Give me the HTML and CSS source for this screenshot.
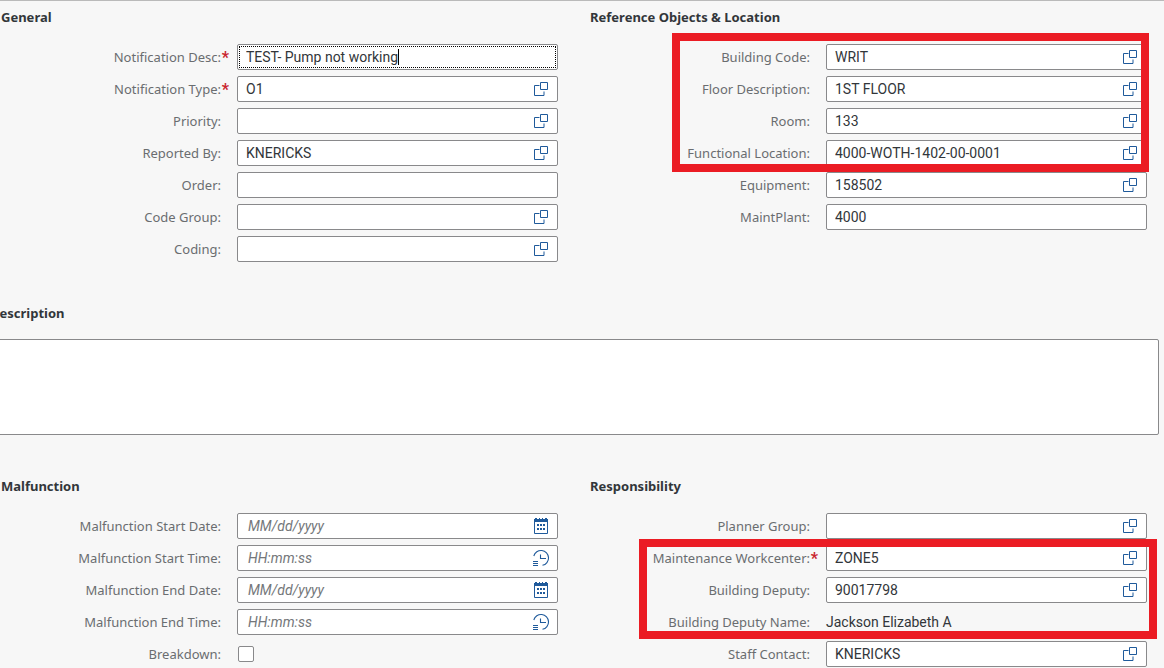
FILE: index.html
```
<!DOCTYPE html>
<html lang="en">
<head>
<meta charset="utf-8">
<title>Notification</title>
<link rel="stylesheet" href="styles.css">
</head>
<body>
<svg class="sprite" aria-hidden="true">
  <symbol id="lookup" viewBox="0 0 16 16"><path d="M6.5 4.500h-5v10h9.500v-4M7.500 1.500h7v7h-7z" fill="none" stroke="currentColor"/></symbol>
  <symbol id="calendar" viewBox="0 0 16 16"><path d="M1.500 2.500h13v13h-13z" fill="none" stroke="currentColor"/><path d="M1 1h1V0h2v1h2V0h1v1h2V0h1v1h2V0h2v1h1v3H1zM4 6h2v2H4zM7 6h2v2H7zM10 6h2v2h-2zM4 10h2v2H4zM7 10h2v2H7zM10 10h2v2h-2z" fill="currentColor"/></symbol>
  <symbol id="clock" viewBox="0 0 18 18"><path d="M1.800 7A7.500 7.500 0 1 1 10.500 16.300M8.500 5.500v4H14M1 12.500h5M1 14.500h5M1 16.500h5" fill="none" stroke="currentColor" stroke-width="1.100"/></symbol>
</svg>
<main class="page">
  <div class="columns">
    <section class="form">
      <h2 class="title">General</h2>
      <div class="rows">
        <div class="row"><label class="label required" for="desc">Notification Desc:</label><div class="field focused"><input class="input" id="desc" value="TEST- Pump not working"><span class="caret"></span></div></div>
        <div class="row"><label class="label required" for="type">Notification Type:</label><div class="field"><input class="input" id="type" value="O1"><button class="help" aria-label="Select type"><svg class="icon"><use href="#lookup"/></svg></button></div></div>
        <div class="row"><label class="label" for="priority">Priority:</label><div class="field"><input class="input" id="priority"><button class="help" aria-label="Select priority"><svg class="icon"><use href="#lookup"/></svg></button></div></div>
        <div class="row"><label class="label" for="reported">Reported By:</label><div class="field"><input class="input" id="reported" value="KNERICKS"><button class="help" aria-label="Select reporter"><svg class="icon"><use href="#lookup"/></svg></button></div></div>
        <div class="row"><label class="label" for="order">Order:</label><div class="field"><input class="input" id="order"></div></div>
        <div class="row"><label class="label" for="group">Code Group:</label><div class="field"><input class="input" id="group"><button class="help" aria-label="Select code group"><svg class="icon"><use href="#lookup"/></svg></button></div></div>
        <div class="row"><label class="label" for="coding">Coding:</label><div class="field"><input class="input" id="coding"><button class="help" aria-label="Select coding"><svg class="icon"><use href="#lookup"/></svg></button></div></div>
      </div>
    </section>
    <section class="form">
      <h2 class="title">Reference Objects &amp; Location</h2>
      <div class="rows">
        <div class="rows marked marked-location">
          <div class="row"><label class="label" for="building">Building Code:</label><div class="field"><input class="input" id="building" value="WRIT"><button class="help" aria-label="Select building"><svg class="icon"><use href="#lookup"/></svg></button></div></div>
          <div class="row"><label class="label" for="floor">Floor Description:</label><div class="field"><input class="input" id="floor" value="1ST FLOOR"><button class="help" aria-label="Select floor"><svg class="icon"><use href="#lookup"/></svg></button></div></div>
          <div class="row"><label class="label" for="room">Room:</label><div class="field"><input class="input" id="room" value="133"><button class="help" aria-label="Select room"><svg class="icon"><use href="#lookup"/></svg></button></div></div>
          <div class="row"><label class="label" for="location">Functional Location:</label><div class="field"><input class="input" id="location" value="4000-WOTH-1402-00-0001"><button class="help" aria-label="Select location"><svg class="icon"><use href="#lookup"/></svg></button></div></div>
        </div>
        <div class="row"><label class="label" for="equipment">Equipment:</label><div class="field"><input class="input" id="equipment" value="158502"><button class="help" aria-label="Select equipment"><svg class="icon"><use href="#lookup"/></svg></button></div></div>
        <div class="row"><label class="label" for="plant">MaintPlant:</label><div class="field"><input class="input" id="plant" value="4000"></div></div>
      </div>
    </section>
  </div>
  <section class="description">
    <h2 class="title"><label for="text">Description</label></h2>
    <textarea class="textarea" id="text"></textarea>
  </section>
  <div class="columns">
    <section class="form">
      <h2 class="title">Malfunction</h2>
      <div class="rows">
        <div class="row"><label class="label" for="sdate">Malfunction Start Date:</label><div class="field"><input class="input" id="sdate" placeholder="MM/dd/yyyy"><button class="help" aria-label="Pick start date"><svg class="icon"><use href="#calendar"/></svg></button></div></div>
        <div class="row"><label class="label" for="stime">Malfunction Start Time:</label><div class="field"><input class="input" id="stime" placeholder="HH:mm:ss"><button class="help" aria-label="Pick start time"><svg class="icon icon-clock"><use href="#clock"/></svg></button></div></div>
        <div class="row"><label class="label" for="edate">Malfunction End Date:</label><div class="field"><input class="input" id="edate" placeholder="MM/dd/yyyy"><button class="help" aria-label="Pick end date"><svg class="icon"><use href="#calendar"/></svg></button></div></div>
        <div class="row"><label class="label" for="etime">Malfunction End Time:</label><div class="field"><input class="input" id="etime" placeholder="HH:mm:ss"><button class="help" aria-label="Pick end time"><svg class="icon icon-clock"><use href="#clock"/></svg></button></div></div>
        <div class="row"><label class="label" for="breakdown">Breakdown:</label><input class="checkbox" type="checkbox" id="breakdown"></div>
      </div>
    </section>
    <section class="form">
      <h2 class="title">Responsibility</h2>
      <div class="rows">
        <div class="row"><label class="label" for="planner">Planner Group:</label><div class="field"><input class="input" id="planner"><button class="help" aria-label="Select planner group"><svg class="icon"><use href="#lookup"/></svg></button></div></div>
        <div class="rows marked marked-deputy">
          <div class="row"><label class="label required" for="workcenter">Maintenance Workcenter:</label><div class="field"><input class="input" id="workcenter" value="ZONE5"><button class="help" aria-label="Select workcenter"><svg class="icon"><use href="#lookup"/></svg></button></div></div>
          <div class="row"><label class="label" for="deputy">Building Deputy:</label><div class="field"><input class="input" id="deputy" value="90017798"><button class="help" aria-label="Select deputy"><svg class="icon"><use href="#lookup"/></svg></button></div></div>
          <div class="row"><label class="label" for="name">Building Deputy Name:</label><output class="value" id="name">Jackson Elizabeth A</output></div>
        </div>
        <div class="row"><label class="label" for="staff">Staff Contact:</label><div class="field"><input class="input" id="staff" value="KNERICKS"><button class="help" aria-label="Select staff contact"><svg class="icon"><use href="#lookup"/></svg></button></div></div>
      </div>
    </section>
  </div>
</main>
</body>
</html>
```
FILE: styles.css
```
* { box-sizing: border-box; }
body {
  margin: 0;
  background: #f7f7f7;
  color: #32363a;
  font: 14px/18px Roboto, sans-serif;
}
.sprite { position: absolute; width: 0; height: 0; }
.page {
  display: flex;
  flex-direction: column;
  gap: 42px;
  padding: 7px 17px 0 1px;
  border-top: 1px solid #bababa;
}
.columns {
  display: grid;
  grid-template-columns: 1fr 1fr;
  column-gap: 32px;
}
.title {
  margin: 0 0 18px;
  font: 700 13px/18px "Noto Sans", sans-serif;
}
.rows { display: flex; flex-direction: column; gap: 6px; }
.row {
  display: grid;
  grid-template-columns: 228fr 321fr;
  column-gap: 8px;
  align-items: center;
  min-height: 26px;
}
.label {
  position: relative;
  padding-right: 8px;
  color: #6a6d70;
  font: 13px/18px "Noto Sans", sans-serif;
  text-align: right;
  white-space: nowrap;
}
.required::after {
  content: "*";
  position: absolute;
  right: 0;
  top: 1px;
  color: #c9252d;
  font: 700 16px/18px Roboto, sans-serif;
}
.field {
  position: relative;
  display: flex;
  height: 26px;
  border: 1px solid #89898b;
  border-radius: 2px;
  background: #fff;
}
.focused { outline: 1px dotted #000; outline-offset: -3px; }
.caret {
  position: absolute;
  left: 160px;
  top: 4px;
  width: 1px;
  height: 16px;
  background: #000;
}
.input {
  flex: 1;
  min-width: 0;
  padding: 0 8px;
  border: 0;
  outline: 0;
  background: transparent;
  color: #32363a;
  font: inherit;
}
.input::placeholder {
  padding-left: 2px;
  color: #74777a;
  font-style: italic;
  opacity: 1;
}
.help {
  display: flex;
  align-items: center;
  justify-content: center;
  width: 32px;
  padding: 0;
  border: 0;
  background: transparent;
  color: #1f5a9b;
}
.icon { width: 16px; height: 16px; }
.icon-clock { width: 18px; height: 18px; }
.checkbox {
  appearance: none;
  width: 16px;
  height: 16px;
  margin: 0 0 0 1px;
  border: 1px solid #89898b;
  border-radius: 2px;
  background: #fff;
}
.marked { position: relative; }
.marked::after {
  content: "";
  position: absolute;
  border: 8px solid #eb1c24;
  pointer-events: none;
}
.marked-location::after { inset: -11px -2px -6px 82px; }
.marked-deputy::after { inset: -6px -10px -4px 49px; }
.description { margin: 0 -12px 0 -11px; }
.description .title { margin-bottom: 17px; }
.textarea {
  display: block;
  width: 100%;
  height: 96px;
  padding: 8px;
  border: 1px solid #89898b;
  border-radius: 2px;
  outline: 0;
  background: #fff;
  font: inherit;
  resize: none;
}
```
